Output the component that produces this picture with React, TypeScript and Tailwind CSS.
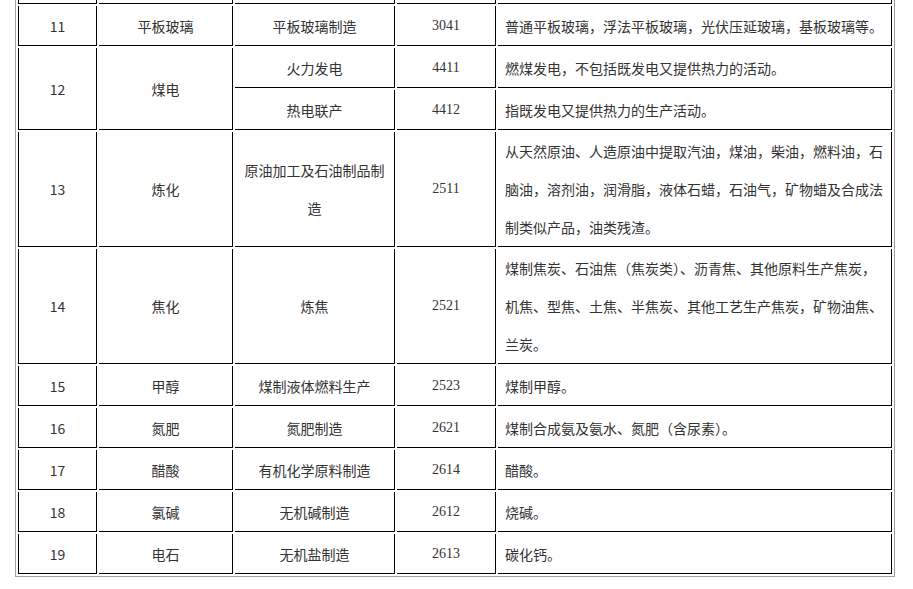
type Row = {
  no: string
  name: string
  items: { industry: string; code: string; desc: string }[]
}

const rows: Row[] = [
  { no: '11', name: '平板玻璃', items: [{ industry: '平板玻璃制造', code: '3041', desc: '普通平板玻璃，浮法平板玻璃，光伏压延玻璃，基板玻璃等。' }] },
  {
    no: '12',
    name: '煤电',
    items: [
      { industry: '火力发电', code: '4411', desc: '燃煤发电，不包括既发电又提供热力的活动。' },
      { industry: '热电联产', code: '4412', desc: '指既发电又提供热力的生产活动。' },
    ],
  },
  {
    no: '13',
    name: '炼化',
    items: [
      {
        industry: '原油加工及石油制品制造',
        code: '2511',
        desc: '从天然原油、人造原油中提取汽油，煤油，柴油，燃料油，石脑油，溶剂油，润滑脂，液体石蜡，石油气，矿物蜡及合成法制类似产品，油类残渣。',
      },
    ],
  },
  {
    no: '14',
    name: '焦化',
    items: [
      {
        industry: '炼焦',
        code: '2521',
        desc: '煤制焦炭、石油焦（焦炭类）、沥青焦、其他原料生产焦炭，机焦、型焦、土焦、半焦炭、其他工艺生产焦炭，矿物油焦、兰炭。',
      },
    ],
  },
  { no: '15', name: '甲醇', items: [{ industry: '煤制液体燃料生产', code: '2523', desc: '煤制甲醇。' }] },
  { no: '16', name: '氮肥', items: [{ industry: '氮肥制造', code: '2621', desc: '煤制合成氨及氨水、氮肥（含尿素）。' }] },
  { no: '17', name: '醋酸', items: [{ industry: '有机化学原料制造', code: '2614', desc: '醋酸。' }] },
  { no: '18', name: '氯碱', items: [{ industry: '无机碱制造', code: '2612', desc: '烧碱。' }] },
  { no: '19', name: '电石', items: [{ industry: '无机盐制造', code: '2613', desc: '碳化钙。' }] },
]

const cell = 'border-r border-b border-black px-[7px] py-0 align-middle leading-[38px]'

export default function App() {
  return (
    <div className="min-h-[589px] bg-white overflow-hidden">
      <table
        className="ml-[15px] mt-[-39px] w-[880px] table-fixed border-separate border-spacing-[2px] border border-[#a0a0a0] text-[14px] text-[#333]"
        style={{ fontFamily: '"Noto Sans CJK SC", "Noto Sans", sans-serif' }}
      >
        <tbody>
          {/* previous row, scrolled out of view */}
          <tr className="h-[40px]">
            <td className={`${cell} border-l w-[79px]`} />
            <td className={`${cell} w-[134px]`} />
            <td className={`${cell} w-[160px]`} />
            <td className={`${cell} w-[99px]`} />
            <td className={`${cell} w-[394px]`} />
          </tr>
          {rows.map((r) =>
            r.items.map((it, i) => (
              <tr key={r.no + it.code} className="h-[40px]">
                {i === 0 && (
                  <>
                    <td rowSpan={r.items.length} className={`${cell} border-l text-center`}>
                      {r.no}
                    </td>
                    <td rowSpan={r.items.length} className={`${cell} text-center`}>
                      {r.name}
                    </td>
                  </>
                )}
                <td className={`${cell} text-center`}>{it.industry}</td>
                <td className={`${cell} text-center font-['Liberation_Serif',serif]`}>{it.code}</td>
                <td className={`${cell} text-left`}>{it.desc}</td>
              </tr>
            )),
          )}
        </tbody>
      </table>
    </div>
  )
}
